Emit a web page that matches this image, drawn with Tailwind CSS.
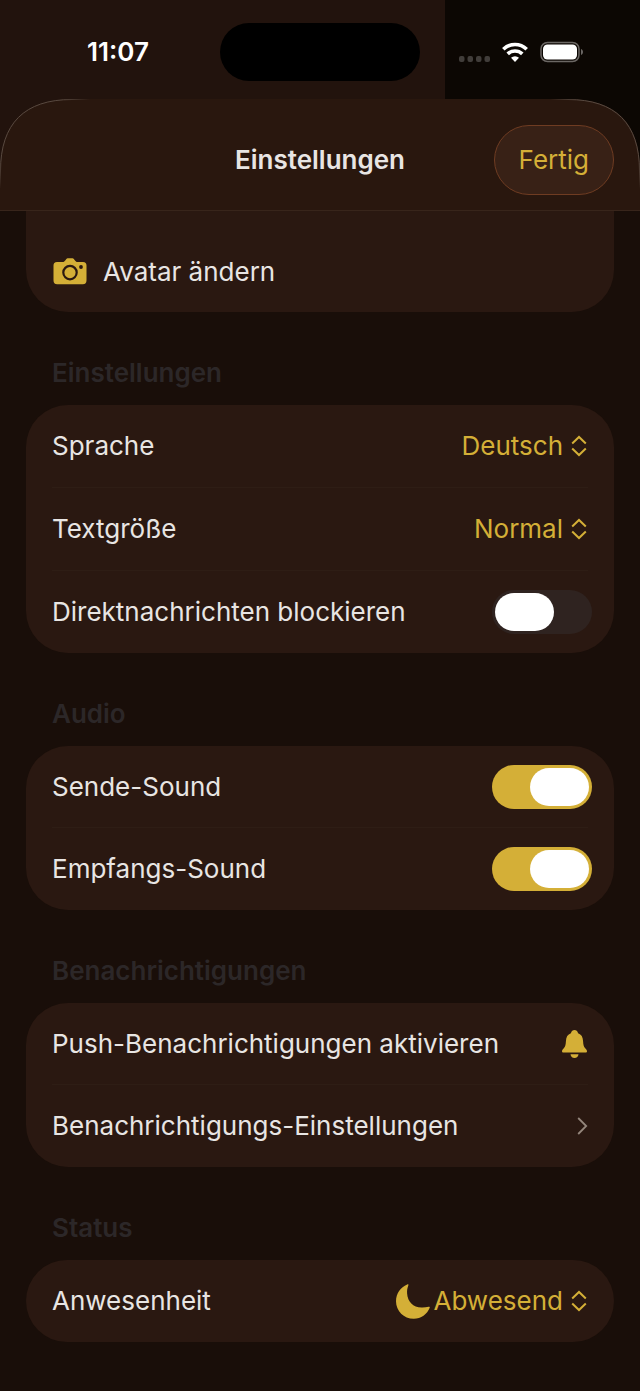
<!DOCTYPE html>
<html lang="de">
<head>
  <meta charset="utf-8">
  <meta name="viewport" content="width=device-width, initial-scale=1">
  <title>Einstellungen</title>
  <script src="https://cdn.jsdelivr.net/npm/@tailwindcss/browser@4"></script>
</head>
<body class="min-h-screen bg-[#190e09] font-['Inter',sans-serif] text-[26px] leading-[34px] text-[#e8e5e3]">

  <!-- Status bar -->
  <div class="bg-[linear-gradient(to_left,#0c0703_195px,#22130d_195px)]">
    <div class="grid h-[99px] grid-cols-[1fr_200px_1fr] items-center pt-1">
      <div class="pl-4 text-center font-semibold text-white">11:07</div>
      <div class="h-[58px] rounded-full bg-black"></div>
      <div class="flex items-center gap-3 pl-[39px]">
        <svg class="mt-[14px] h-[6px] w-[31px]" viewBox="0 0 31 6" fill="#413d3a">
          <rect x="0" y="0" width="5.5" height="6" rx="2"/>
          <rect x="8.5" y="0" width="5.5" height="6" rx="2"/>
          <rect x="17" y="0" width="5.5" height="6" rx="2"/>
          <rect x="25.5" y="0" width="5.5" height="6" rx="2"/>
        </svg>
        <svg class="h-[20px] w-[26px]" viewBox="0 0 26 20" fill="none" stroke="#fff" stroke-width="3.6">
          <path d="M1.3 7.2a16.8 16.8 0 0 1 23.4 0"/>
          <path d="M5.7 11.9a10.5 10.5 0 0 1 14.6 0"/>
          <path d="M13 20l-4-4.2a6 6 0 0 1 8 0z" fill="#fff" stroke="none"/>
        </svg>
        <svg class="h-[22px] w-[44px]" viewBox="0 0 44 22">
          <rect x="1" y="1.5" width="38" height="19" rx="6.5" fill="none" stroke="#6b6764" stroke-width="1.5"/>
          <rect x="3" y="3.5" width="34" height="15" rx="4.5" fill="#fff"/>
          <path d="M41 8c2.7 1 2.7 5 0 6z" fill="#6b6764"/>
        </svg>
      </div>
    </div>
  </div>

  <!-- Sheet header -->
  <header class="relative grid h-[112px] grid-cols-[1fr_auto_1fr] items-center border-b border-[#38251b] bg-[#29170e] px-[26px] pt-[10px]">
    <svg class="absolute top-0 left-0 h-[90px] w-[90px]" viewBox="0 0 90 90" fill="none">
      <defs>
        <linearGradient id="edge" x1="0" y1="1" x2="1" y2="0">
          <stop offset="0" stop-color="#57483f" stop-opacity="0"/>
          <stop offset=".15" stop-color="#57483f"/>
          <stop offset=".85" stop-color="#57483f"/>
          <stop offset="1" stop-color="#57483f" stop-opacity="0"/>
        </linearGradient>
      </defs>
      <path fill="#22130d" d="M0 0V72C0 24 24 0 72 0z"/>
      <path stroke="url(#edge)" d="M.5 90V72C.5 24.5 24.5.5 72 .5H90"/>
    </svg>
    <svg class="absolute top-0 right-0 h-[90px] w-[90px] -scale-x-100" viewBox="0 0 90 90" fill="none">
      <path fill="#0c0703" d="M0 0V72C0 24 24 0 72 0z"/>
      <path stroke="url(#edge)" d="M.5 90V72C.5 24.5 24.5.5 72 .5H90"/>
    </svg>
    <h1 class="col-start-2 font-semibold">Einstellungen</h1>
    <button class="relative h-[70px] justify-self-end rounded-full border border-[#6f3c22] bg-[#382116] px-6 text-[#d4af37]">Fertig</button>
  </header>

  <main class="px-[26px] pb-12">

    <section class="rounded-b-[42px] bg-[#2a1811]">
      <button class="flex h-[101px] w-full items-center gap-4 pt-5 pl-[27px] text-left">
        <svg class="h-[27px] w-[34px]" viewBox="0 0 34 27">
          <path fill="#d4af37" d="M4 4h5.500c1.200 0 1.800-.4 2.500-1.300l.8-1C13.600.6 14.200.3 15.500.3h3.200c1.300 0 1.900.3 2.700 1.400l.8 1c.7.9 1.300 1.300 2.500 1.300H30c2.400 0 3.500 1.200 3.500 3.600v14.700c0 2.600-1.100 3.900-3.700 3.900H4.200C1.600 26.200.5 24.900.5 22.300V7.600C.5 5.200 1.600 4 4 4z"/>
          <circle cx="17" cy="14.600" r="6.700" fill="none" stroke="#2a1811" stroke-width="2.200"/>
          <circle cx="28" cy="9" r="1.900" fill="#2a1811"/>
        </svg>
        Avatar ändern
      </button>
    </section>

    <h2 class="px-[26px] pt-11 pb-[15px] font-semibold text-[#2c2728]">Einstellungen</h2>
    <section class="rounded-[42px] bg-[#2a1811] px-[26px]">
      <div class="flex h-[83px] items-center justify-between border-b border-[#2e1d15]">
        <label for="language">Sprache</label>
        <div class="flex items-center">
          <select id="language" class="field-sizing-content appearance-none pr-7 text-right text-[#d4af37]">
            <option>Deutsch</option>
            <option>English</option>
          </select>
          <svg class="pointer-events-none mr-px -ml-[20px] h-[22px] w-[16px]" viewBox="0 0 16 22" fill="none" stroke="#d4af37" stroke-width="2">
            <path d="M1.200 8.500L8 2l6.800 6.500M1.200 13.500L8 20l6.800-6.500"/>
          </svg>
        </div>
      </div>
      <div class="flex h-[83px] items-center justify-between border-b border-[#2e1d15]">
        <label for="textsize">Textgröße</label>
        <div class="flex items-center">
          <select id="textsize" class="field-sizing-content appearance-none pr-7 text-right text-[#d4af37]">
            <option>Normal</option>
            <option>Groß</option>
          </select>
          <svg class="pointer-events-none mr-px -ml-[20px] h-[22px] w-[16px]" viewBox="0 0 16 22" fill="none" stroke="#d4af37" stroke-width="2">
            <path d="M1.200 8.500L8 2l6.800 6.500M1.200 13.500L8 20l6.800-6.500"/>
          </svg>
        </div>
      </div>
      <div class="-mr-1 flex h-[82px] items-center justify-between">
        <label for="block-dm">Direktnachrichten blockieren</label>
        <input id="block-dm" type="checkbox" class="flex h-[44px] w-[100px] shrink-0 appearance-none items-center rounded-full bg-[#2f2320] px-[3px] before:h-[38px] before:w-[59px] before:rounded-full before:bg-white checked:justify-end checked:bg-[#d4af37]">
      </div>
    </section>

    <h2 class="px-[26px] pt-11 pb-[15px] font-semibold text-[#2c2728]">Audio</h2>
    <section class="rounded-[42px] bg-[#2a1811] px-[26px]">
      <div class="border-b border-[#2e1d15]">
        <div class="-mr-1 flex h-[81px] items-center justify-between">
          <label for="send-sound">Sende-Sound</label>
          <input id="send-sound" type="checkbox" checked class="flex h-[44px] w-[100px] shrink-0 appearance-none items-center rounded-full bg-[#2f2320] px-[3px] before:h-[38px] before:w-[59px] before:rounded-full before:bg-white checked:justify-end checked:bg-[#d4af37]">
        </div>
      </div>
      <div class="-mr-1 flex h-[82px] items-center justify-between">
        <label for="receive-sound">Empfangs-Sound</label>
        <input id="receive-sound" type="checkbox" checked class="flex h-[44px] w-[100px] shrink-0 appearance-none items-center rounded-full bg-[#2f2320] px-[3px] before:h-[38px] before:w-[59px] before:rounded-full before:bg-white checked:justify-end checked:bg-[#d4af37]">
      </div>
    </section>

    <h2 class="px-[26px] pt-11 pb-[15px] font-semibold text-[#2c2728]">Benachrichtigungen</h2>
    <section class="rounded-[42px] bg-[#2a1811] px-[26px]">
      <button class="flex h-[82px] w-full items-center justify-between border-b border-[#2e1d15] text-left">
        Push-Benachrichtigungen aktivieren
        <svg class="mr-px h-[28px] w-[25px] shrink-0" viewBox="0 0 25 28" fill="#d4af37">
          <path d="M1.500 22.500C.5 22.500 0 22 0 21.200c0-1 .8-1.700 1.800-2.900 1.500-1.800 1.900-3.400 2.100-6.800C4.100 7 5.600 4.300 8.900 3.200 9.500 1.200 10.800 0 12.500 0s3 1.200 3.600 3.200c3.300 1.100 4.800 3.800 5 8.300.2 3.400.6 5 2.100 6.800 1 1.200 1.800 1.900 1.800 2.900 0 .8-.5 1.300-1.500 1.300z"/>
          <path d="M8.500 24.300h8c-.2 2.200-1.800 3.700-4 3.700s-3.800-1.500-4-3.700z"/>
        </svg>
      </button>
      <a href="#" class="flex h-[82px] items-center justify-between">
        Benachrichtigungs-Einstellungen
        <svg class="h-[18px] w-[11px]" viewBox="0 0 11 18" fill="none" stroke="#94867c" stroke-width="1.800">
          <path d="M1.200 1l8 8-8 8"/>
        </svg>
      </a>
    </section>

    <h2 class="px-[26px] pt-11 pb-[15px] font-semibold text-[#2c2728]">Status</h2>
    <section class="rounded-[42px] bg-[#2a1811] px-[26px]">
      <div class="flex h-[82px] items-center justify-between">
        <label for="presence">Anwesenheit</label>
        <div class="flex items-center">
          <svg class="mr-[3px] h-[35px] w-[34px]" viewBox="0 0 34 35" fill="#d4af37">
            <path d="M12.200.3c.4.200.3.600.1 1.200-1 2.500-1.400 5-1.200 8C11.700 18 17 23.200 25.500 23.600c2.600.1 4.800-.2 7.100-.8.900-.2 1.400.1 1.100 1C31.200 30.400 25 34.700 17.800 34.700 7.800 34.700 0 27 0 17.200 0 9.500 4.500 3 11.200.4c.4-.2.7-.2 1-.1z"/>
          </svg>
          <select id="presence" class="field-sizing-content appearance-none pr-7 text-right text-[#d4af37]">
            <option>Abwesend</option>
            <option>Online</option>
          </select>
          <svg class="pointer-events-none mr-px -ml-[20px] h-[22px] w-[16px]" viewBox="0 0 16 22" fill="none" stroke="#d4af37" stroke-width="2">
            <path d="M1.200 8.500L8 2l6.800 6.500M1.200 13.500L8 20l6.800-6.500"/>
          </svg>
        </div>
      </div>
    </section>

  </main>
</body>
</html>
